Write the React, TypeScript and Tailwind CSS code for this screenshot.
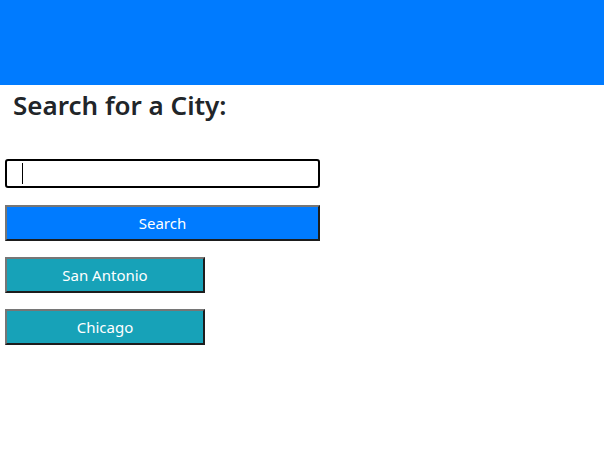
import React, { useState } from 'react';

const App: React.FC = () => {
  const [city, setCity] = useState('');
  const saved = ['San Antonio', 'Chicago'];

  return (
    <div className="min-h-screen bg-white font-['Noto_Sans',sans-serif] text-[#212529]">
      {/* top bar */}
      <header className="h-[85px] bg-[#007bff]" />

      <main className="px-[5px]">
        <h3 className="pl-2 pt-[3px] text-[26px] leading-[34px] font-semibold">Search for a City:</h3>

        <div className="mt-[37px] flex flex-col">
          <div className="relative">
            <input
              autoFocus
              value={city}
              onChange={(e) => setCity(e.target.value)}
              className="h-[29px] w-[315px] rounded-[3px] border-2 border-black px-4 outline-none"
            />
            {/* caret */}
            {city === '' && <span className="pointer-events-none absolute left-[17px] top-[4px] h-[21px] w-px bg-black" />}
          </div>
          <button className="mt-[17px] h-[36px] w-[315px] border-2 border-t-[#767676] border-l-[#767676] border-b-[#1d1d1d] border-r-[#1d1d1d] bg-[#007bff] text-[15px] text-white">
            Search
          </button>
        </div>

        <div className="mt-4 flex flex-col gap-4">
          {saved.map((name) => (
            <button
              key={name}
              className="h-[36px] w-[200px] border-2 border-t-[#767676] border-l-[#767676] border-b-[#1d1d1d] border-r-[#1d1d1d] bg-[#17a2b8] text-[15px] text-white"
            >
              {name}
            </button>
          ))}
        </div>
      </main>
    </div>
  );
};

export default App;
